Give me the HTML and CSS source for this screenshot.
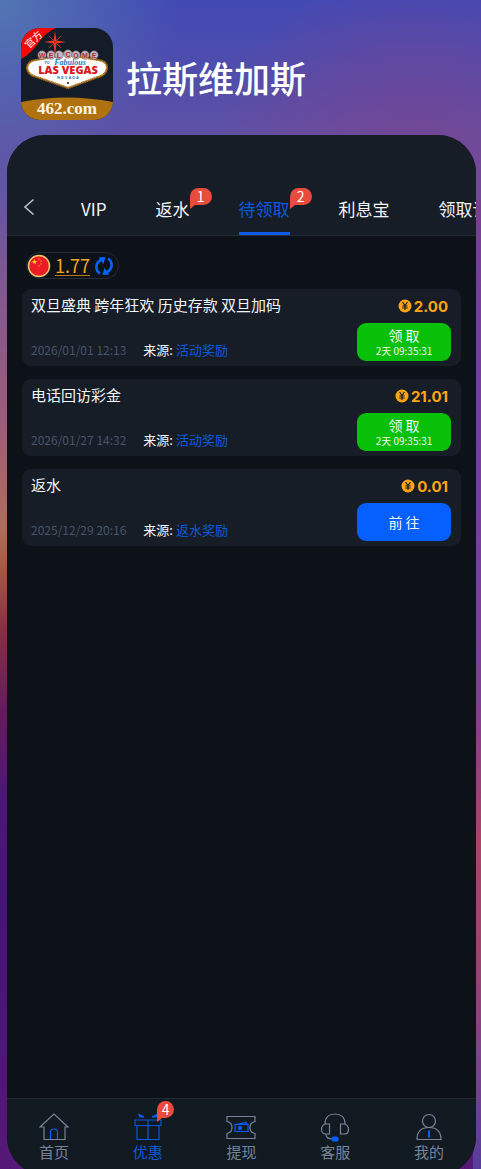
FILE: index.html
```
<!DOCTYPE html>
<html lang="zh-CN">
<head>
    <meta charset="UTF-8">
    <meta name="viewport" content="width=device-width, initial-scale=1.0">
    <title>拉斯维加斯</title>
    <link rel="stylesheet" href="styles.css">
</head>
<body>
    <header class="brand">
      <svg class="logo" viewBox="0 0 92 92" role="img" aria-label="462.com">
        <clipPath id="logo-clip"><rect width="92" height="92" rx="19"/></clipPath>
        <g clip-path="url(#logo-clip)">
          <rect width="92" height="92" fill="#141c28"/>
          <path d="M0 74Q46 65 92 74V92H0z" fill="#b0720f"/>
          <path d="M0 0H35Q25 4 18 14Q10 26 0 31z" fill="#f40808"/>
          <text class="logo-tag" x="13" y="15" transform="rotate(-44 13 12)">官方</text>
          <path d="M34 3l1.500 9.500L45 14l-9.500 1.500L34 28l-1.500-12.500L23 14l9.500-1.500z" fill="#e83a22"/>
          <path d="M28 8l12 12M40 8L28 20" stroke="#c42a1c"/>
          <path d="M6 40Q7 33 15 32L39 28Q47 19 54 28L77 32Q86 33 86 40Q85 47 77 49L47 60L16 49Q7 47 6 40z" fill="#fff" stroke="#a86f14" stroke-width="2.200" stroke-dasharray="1.600 .4"/>
          <g fill="#b9bdc8" stroke="#73505a" stroke-width=".6">
            <circle cx="21" cy="27" r="4.200"/><circle cx="30" cy="27" r="4.200"/><circle cx="38" cy="27" r="4.200"/><circle cx="47" cy="26" r="4.200"/><circle cx="55" cy="27" r="4.200"/><circle cx="64" cy="27" r="4.200"/><circle cx="73" cy="27" r="4.200"/>
          </g>
          <g class="logo-welcome">
            <text x="21" y="30">W</text><text x="30" y="30">E</text><text x="38" y="30">L</text><text x="47" y="29">C</text><text x="55" y="30">O</text><text x="64" y="30">M</text><text x="73" y="30">E</text>
          </g>
          <text class="logo-to" x="26" y="36">TO</text>
          <text class="logo-fab" x="49" y="37">Fabulous</text>
          <text class="logo-vegas" x="47" y="46">LAS VEGAS</text>
          <text class="logo-to" x="47" y="51">N E V A D A</text>
          <circle cx="47" cy="55" r="1" fill="#222"/>
          <text class="logo-domain" x="46" y="86">462.com</text>
        </g>
      </svg>
      <h1>拉斯维加斯</h1>
    </header>

    <main class="phone">
      <nav class="tabs">
        <button class="back" type="button" aria-label="返回">
          <svg width="12" height="18" viewBox="0 0 12 18"><path d="M10.500 1.500L2 9l8.500 7.500" fill="none" stroke="#b4bfd0" stroke-width="1.600"/></svg>
        </button>
        <div class="tab-list">
          <a href="#vip">VIP</a>
          <a href="#rebate">返水<span class="badge">1</span></a>
          <a class="active" href="#pending">待领取<span class="badge">2</span></a>
          <a href="#interest">利息宝</a>
          <a href="#records">领取记录</a>
        </div>
      </nav>

      <section class="content">
        <div class="balance">
          <svg width="24" height="24" viewBox="0 0 24 24">
            <circle cx="12" cy="12" r="10.500" fill="#ed1c24" stroke="#f3c66b" stroke-width="1.500"/>
            <path d="M7.500 5l.7 1.900h2l-1.600 1.200.6 2-1.700-1.200-1.700 1.200.6-2-1.600-1.200h2z" fill="#ffde00"/>
            <g fill="#f5a623"><circle cx="12" cy="5" r=".7"/><circle cx="14" cy="7" r=".7"/><circle cx="14" cy="10" r=".7"/><circle cx="12" cy="12" r=".7"/></g>
          </svg>
          <a href="#balance">1.77</a>
          <button type="button" aria-label="刷新">
            <svg width="20" height="20" viewBox="0 0 20 20">
              <g fill="none" stroke="#0563ff" stroke-width="2.600"><path d="M6 17.500C1 14 1 7 7 4"/><path d="M14 2.500C19 6 19 13 13 16"/></g>
              <path d="M4.500 1.500L11.500 1 9.500 8zM15.500 18.500L8.500 19l2-7z" fill="#0563ff"/>
            </svg>
          </button>
        </div>

        <article class="card">
          <h2>双旦盛典 跨年狂欢 历史存款 双旦加码</h2>
          <strong class="amount"><svg width="14" height="14" viewBox="0 0 14 14"><circle cx="7" cy="7" r="6.500" fill="#ffa511"/><path d="M4.500 3L7 6.500 9.500 3M7 6.500V11M4.300 7h5.400M4.300 9h5.400" fill="none" stroke="#171e29" stroke-width="1.200"/></svg>2.00</strong>
          <p class="meta"><time>2026/01/01 12:13</time><span>来源: <a href="#activity">活动奖励</a></span></p>
          <button class="claim" type="button">领 取<small>2天 09:35:31</small></button>
        </article>

        <article class="card">
          <h2>电话回访彩金</h2>
          <strong class="amount"><svg width="14" height="14" viewBox="0 0 14 14"><circle cx="7" cy="7" r="6.500" fill="#ffa511"/><path d="M4.500 3L7 6.500 9.500 3M7 6.500V11M4.300 7h5.400M4.300 9h5.400" fill="none" stroke="#171e29" stroke-width="1.200"/></svg>21.01</strong>
          <p class="meta"><time>2026/01/27 14:32</time><span>来源: <a href="#activity">活动奖励</a></span></p>
          <button class="claim" type="button">领 取<small>2天 09:35:31</small></button>
        </article>

        <article class="card">
          <h2>返水</h2>
          <strong class="amount"><svg width="14" height="14" viewBox="0 0 14 14"><circle cx="7" cy="7" r="6.500" fill="#ffa511"/><path d="M4.500 3L7 6.500 9.500 3M7 6.500V11M4.300 7h5.400M4.300 9h5.400" fill="none" stroke="#171e29" stroke-width="1.200"/></svg>0.01</strong>
          <p class="meta"><time>2025/12/29 20:16</time><span>来源: <a href="#rebate">返水奖励</a></span></p>
          <button class="claim go" type="button">前 往</button>
        </article>
      </section>

      <nav class="bottom">
        <a href="#home">
          <svg viewBox="0 0 30 30"><path d="M5 15v12.500h21V15h3L15 2 1 15z"/><path class="blue" d="M11.500 27v-7q0-3 3.500-3t3.500 3v7"/></svg>
          首页
        </a>
        <a class="active" href="#offers">
          <svg viewBox="0 0 30 30"><path d="M2 8h26v5.500H2zM4 13.500h22v14H4zM15 8v19.500"/><path class="fill" d="M6 2.500l5 2.500-4 0zM24 2.500l-5 2.500 4 0z"/></svg>
          优惠<span class="badge">4</span>
        </a>
        <a href="#withdraw">
          <svg viewBox="0 0 30 30"><path d="M1 4.500h28v5q-5 1-5 6t5 6v5H1v-5q5-1 5-6T1 9.500z"/><path class="blue" d="M9 12.500h13v7H9zM10 12.500l10-2 1 2"/><circle class="fill" cx="14" cy="16" r="1.500"/></svg>
          提现
        </a>
        <a href="#service">
          <svg viewBox="0 0 30 30"><path d="M5 12C5 5 9 2 15 2s10 3 10 10M5 12h4.500v10H6c-6 0-6-9 0-10M25 12h-4.500v10H24c6 0 6-9 0-10M6 22q0 5 6 5"/><rect class="fill" x="12" y="25" width="6" height="4" rx="2"/></svg>
          客服
        </a>
        <a href="#me">
          <svg viewBox="0 0 30 30"><circle cx="15" cy="9" r="6.500"/><path d="M3 27.500q0-12 12-12t12 12z"/><path class="blue" d="M15 18.500v7" stroke-width="2"/></svg>
          我的
        </a>
      </nav>
    </main>
</body>
</html>
```

FILE: styles.css
```
* {
  box-sizing: border-box;
}

body {
  margin: 0;
  min-height: 100vh;
  display: flex;
  flex-direction: column;
  overflow: hidden;
  font-family: "Noto Sans CJK SC", sans-serif;
  color: #f3f5f8;
  background:
    radial-gradient(circle at 0 0, rgba(84, 122, 178, 0.9), rgba(78, 100, 178, 0) 180px),
    radial-gradient(circle at 420px 180px, rgba(125, 66, 142, 0.8), rgba(80, 70, 170, 0) 220px),
    linear-gradient(#6f4099 0, #75409a 300px, #7d4092 500px, #a84566 640px, #98456f 760px, #7b448a 860px, #573d9c 969px) 100% 200px / 8px 969px no-repeat,
    linear-gradient(#4149b4 0, #5d51a5 135px, #6255a5 190px, #82578f 290px, #995c7d 410px, #b06c59 530px, #a85644 570px, #8a2d43 630px, #641b5e 710px, #4d1777 800px, #461476 900px, #561877 100%);
}

a {
  color: inherit;
  text-decoration: none;
}

button {
  font-family: inherit;
  color: inherit;
  border: 0;
  padding: 0;
  background: none;
}

svg {
  display: block;
}

/* header */
.brand {
  display: flex;
  align-items: center;
  gap: 13px;
  padding: 28px 21px 15px;
}

.brand h1 {
  margin: 6px 0 0;
  font-size: 36px;
  line-height: 52px;
  font-weight: 500;
  color: #fff;
}

.logo {
  width: 92px;
  height: 92px;
}

.logo text {
  text-anchor: middle;
  font-family: "Liberation Sans", sans-serif;
}

.logo .logo-tag {
  font-family: "Noto Sans CJK SC", sans-serif;
  font-size: 10px;
  fill: #fff;
}

.logo .logo-welcome {
  font-size: 7px;
  font-weight: bold;
  fill: #b8242b;
}

.logo .logo-to {
  font-size: 4px;
  font-weight: bold;
  fill: #1d78bd;
}

.logo .logo-fab {
  font-family: "Liberation Serif", serif;
  font-size: 8px;
  font-style: italic;
  font-weight: bold;
  fill: #1d78bd;
}

.logo .logo-vegas {
  font-family: "Open Sans", sans-serif;
  font-size: 11px;
  font-weight: 800;
  fill: #d91920;
}

.logo .logo-domain {
  font-family: "Liberation Serif", serif;
  font-size: 17px;
  font-weight: bold;
  fill: #fff5e2;
}

/* screen */
.phone {
  flex: 1;
  display: flex;
  flex-direction: column;
  margin: 0 5px -6px 7px;
  border-radius: 38px;
  overflow: hidden;
  background: #0d1219;
}

.tabs {
  display: flex;
  height: 101px;
  padding-top: 48px;
  background: #161d27;
  border-bottom: 1px solid #202b37;
}

.back {
  width: 44px;
  flex: none;
  display: flex;
  justify-content: center;
  padding-top: 15px;
}

.tab-list {
  flex: 1;
  display: flex;
  gap: 49px;
  padding-left: 30px;
  overflow: hidden;
  font-size: 17px;
  line-height: 52px;
}

.tab-list a {
  flex: none;
  position: relative;
}

.tab-list .active {
  color: #0d59dd;
  border-bottom: 3px solid #0d5be5;
}

.badge {
  position: absolute;
  top: 5px;
  left: 100%;
  width: 22px;
  height: 17px;
  border-radius: 9px 9px 9px 0;
  background: #e94b3c;
  color: #fff;
  font-size: 14px;
  line-height: 17px;
  text-align: center;
}

.badge::after {
  content: "";
  position: absolute;
  left: 0;
  top: 100%;
  border-top: 4px solid #e94b3c;
  border-right: 5px solid transparent;
}

.content {
  flex: 1;
  padding: 16px 15px;
}

.balance {
  display: inline-flex;
  align-items: center;
  gap: 4px;
  height: 27px;
  padding-right: 4px;
  margin: 0 0 10px 4px;
  border: 1px solid #252d38;
  border-radius: 14px;
}

.balance a {
  border-bottom: 1px solid #b87916;
  color: #f5a51c;
  font-size: 18px;
  line-height: 20px;
}

.card {
  display: grid;
  grid-template-columns: 1fr 94px;
  grid-template-rows: 26px 38px;
  row-gap: 5px;
  padding: 3px 10px 5px 9px;
  margin-bottom: 13px;
  border-radius: 9px;
  background: #161d27;
}

.card h2 {
  margin: 0;
  font-size: 15px;
  font-weight: 400;
  line-height: 26px;
  white-space: nowrap;
}

.amount {
  display: flex;
  align-items: center;
  justify-content: flex-end;
  gap: 2px;
  padding: 2px 3px 0 0;
  color: #ffa511;
  font-family: Inter, sans-serif;
  font-size: 15px;
  font-weight: 700;
}

.meta {
  display: flex;
  align-items: flex-end;
  gap: 17px;
  margin: 0;
  font-size: 13px;
  line-height: 20px;
  padding-bottom: 1px;
}

.meta time {
  color: #485468;
  font-size: 12px;
}

.meta a {
  color: #0d59dd;
}

.claim {
  border-radius: 9px;
  background: #07c007;
  color: #f3f9f3;
  font-size: 14px;
  line-height: 18px;
}

.claim small {
  display: block;
  font-size: 10px;
  line-height: 14px;
}

.go {
  background: #0560ff;
}

/* bottom menu */
.bottom {
  display: flex;
  height: 77px;
  border-top: 1px solid #202b37;
  background: #111921;
}

.bottom a {
  position: relative;
  flex: 1;
  display: flex;
  flex-direction: column;
  align-items: center;
  padding-top: 13px;
  color: #77849a;
  font-size: 15px;
  line-height: 20px;
}

.bottom svg {
  width: 30px;
  height: 30px;
  fill: none;
  stroke: currentColor;
  stroke-width: 1.2;
}

.bottom .active {
  color: #0d59dd;
}

.bottom .blue {
  stroke: #0560ff;
}

.bottom .fill {
  fill: #0560ff;
  stroke: #0560ff;
}

.bottom .badge {
  top: 2px;
  left: 60%;
  width: 17px;
}
```
